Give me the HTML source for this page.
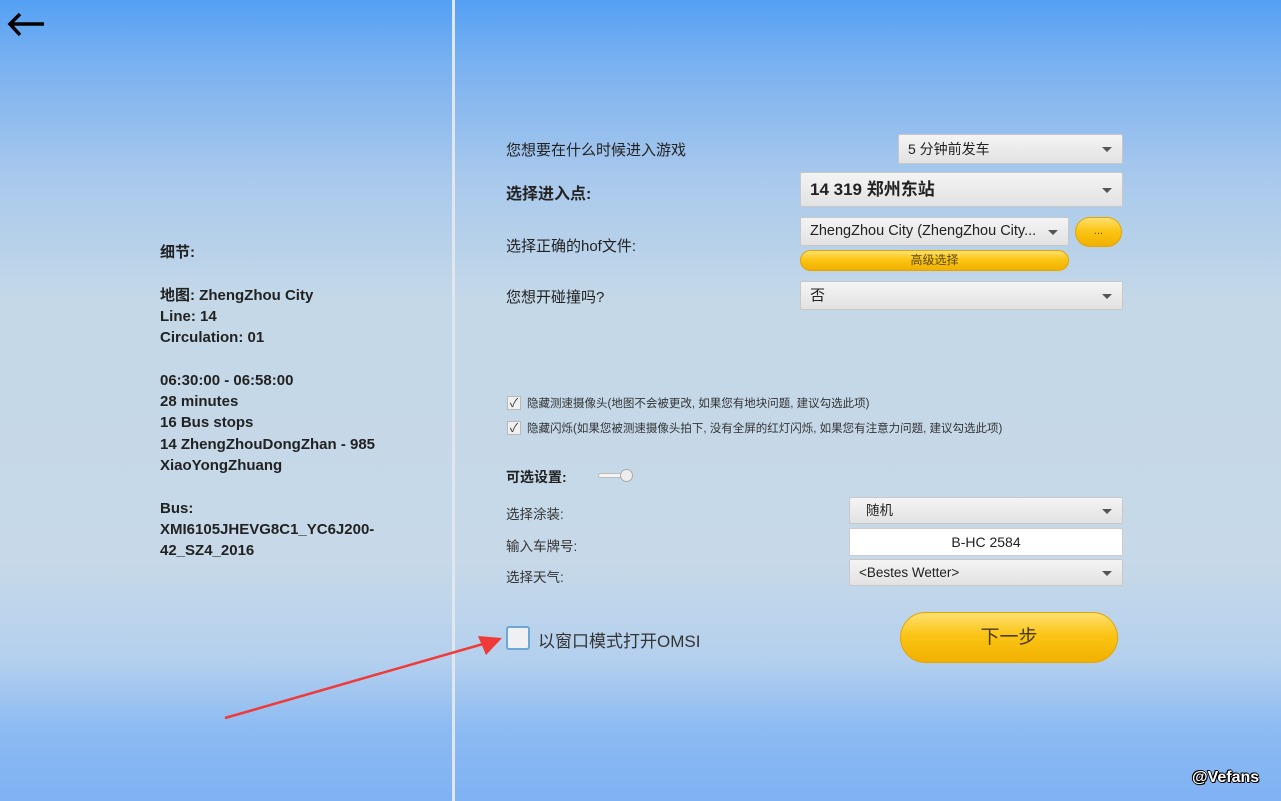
<!DOCTYPE html>
<html><head><meta charset="utf-8"><style>
*{margin:0;padding:0;box-sizing:border-box}
body{width:1281px;height:801px;overflow:hidden;position:relative;font-family:"Liberation Sans","Noto Sans CJK SC",sans-serif;
background:linear-gradient(180deg,#54a0f5 0px,#78b0f0 60px,#a9c9ec 180px,#c4d8e8 300px,#c7d9e8 560px,#b4d0ee 660px,#8cbaf2 730px,#7fb2f4 801px);}
.div{position:absolute;left:452px;top:0;width:3px;height:801px;background:#dfe6ee}
.t{position:absolute;color:#222;white-space:nowrap}
.info{position:absolute;left:160px;top:242px;font-size:15px;font-weight:bold;line-height:21.3px;color:#222}
.sel{position:absolute;background:linear-gradient(#f4f4f4,#e2e2e2);border:1px solid #c8c8c8;border-radius:2px;color:#222;font-size:14px;padding-left:9px;white-space:nowrap;overflow:hidden}
.sel:after{content:"";position:absolute;right:10px;top:50%;margin-top:-2px;border-left:5px solid transparent;border-right:5px solid transparent;border-top:5px solid #555}
.gold{position:absolute;background:linear-gradient(#ffe070,#fbc515 45%,#f2b000);border:1px solid #e3a500;border-radius:20px;color:#5a4a10;text-align:center}
.cb{position:absolute;width:14px;height:14px;background:#f0f0f0;border:1px solid #b9b9b9;font-size:12px;line-height:12px;text-align:center;color:#333}
.lab{font-size:13.5px;color:#333}
</style></head><body>
<div class="div"></div>
<svg style="position:absolute;left:5px;top:11px" width="40" height="28"><path d="M39 13H5M15 3L5 13L15 24" stroke="#000" stroke-width="3.5" fill="none"/></svg>
<div class="info">细节:<br><br>地图: ZhengZhou City<br>Line: 14<br>Circulation: 01<br><br>06:30:00 - 06:58:00<br>28 minutes<br>16 Bus stops<br>14 ZhengZhouDongZhan - 985<br>XiaoYongZhuang<br><br>Bus:<br>XMI6105JHEVG8C1_YC6J200-<br>42_SZ4_2016</div>

<div class="t" style="left:506px;top:139px;font-size:15px">您想要在什么时候进入游戏</div>
<div class="sel" style="left:898px;top:134px;width:225px;height:30px;line-height:28px">5 分钟前发车</div>
<div class="t" style="left:506px;top:180px;font-size:16px;font-weight:bold">选择进入点:</div>
<div class="sel" style="left:800px;top:172px;width:323px;height:35px;line-height:33px;font-size:17px;font-weight:bold">14 319 郑州东站</div>
<div class="t" style="left:506px;top:235px;font-size:15px">选择正确的hof文件:</div>
<div class="sel" style="left:800px;top:217px;width:269px;height:29px;line-height:27px;font-size:14.5px">ZhengZhou City (ZhengZhou City...</div>
<div class="gold" style="left:1075px;top:217px;width:47px;height:30px;line-height:26px;font-size:11px">...</div>
<div class="gold" style="left:800px;top:250px;width:269px;height:21px;line-height:19px;font-size:12px">高级选择</div>
<div class="t" style="left:506px;top:286px;font-size:15px">您想开碰撞吗?</div>
<div class="sel" style="left:800px;top:281px;width:323px;height:29px;line-height:27px;font-size:15px">否</div>

<div class="cb" style="left:507px;top:396px">✓</div>
<div class="t" style="left:527px;top:395px;font-size:11.5px;color:#333">隐藏测速摄像头(地图不会被更改, 如果您有地块问题, 建议勾选此项)</div>
<div class="cb" style="left:507px;top:421px">✓</div>
<div class="t" style="left:527px;top:420px;font-size:11.5px;color:#333">隐藏闪烁(如果您被测速摄像头拍下, 没有全屏的红灯闪烁, 如果您有注意力问题, 建议勾选此项)</div>

<div class="t" style="left:506px;top:467px;font-size:14px;font-weight:bold">可选设置:</div>
<div style="position:absolute;left:598px;top:473px;width:30px;height:5px;background:#f3f3f3;border:1px solid #bbb;border-radius:3px"></div>
<div style="position:absolute;left:620px;top:469px;width:13px;height:13px;background:#eee;border:1px solid #aaa;border-radius:50%"></div>
<div class="t lab" style="left:506px;top:503px">选择涂装:</div>
<div class="sel" style="left:849px;top:497px;width:274px;height:27px;line-height:25px;font-size:13.5px;padding-left:16px">随机</div>
<div class="t lab" style="left:506px;top:535px">输入车牌号:</div>
<div style="position:absolute;left:849px;top:528px;width:274px;height:28px;background:#fff;border:1px solid #ccc;text-align:center;line-height:26px;font-size:14px;color:#222">B-HC 2584</div>
<div class="t lab" style="left:506px;top:566px">选择天气:</div>
<div class="sel" style="left:849px;top:559px;width:274px;height:27px;line-height:25px;font-size:13.5px;padding-left:9px">&lt;Bestes Wetter&gt;</div>

<div style="position:absolute;left:506px;top:626px;width:24px;height:24px;background:#eef0f2;border:2px solid #6aa8d8;border-radius:3px"></div>
<div class="t" style="left:538px;top:627px;font-size:17px;color:#333">以窗口模式打开OMSI</div>
<div class="gold" style="left:900px;top:612px;width:218px;height:51px;line-height:49px;font-size:19px;border-radius:26px;color:#4a3a10">下一步</div>

<svg style="position:absolute;left:220px;top:625px" width="300" height="100"><path d="M5 93L270 17" stroke="#f03a3a" stroke-width="2.5"/><path d="M282 13L258 11L266 30Z" fill="#f03a3a"/></svg>
<div class="t" style="left:1192px;top:769px;font-size:16px;font-weight:bold;color:#fff;text-shadow:1px 0 0 #000,-1px 0 0 #000,0 1px 0 #000,0 -1px 0 #000,1px 1px 0 #000,-1px -1px 0 #000">@Vefans</div>
</body></html>
